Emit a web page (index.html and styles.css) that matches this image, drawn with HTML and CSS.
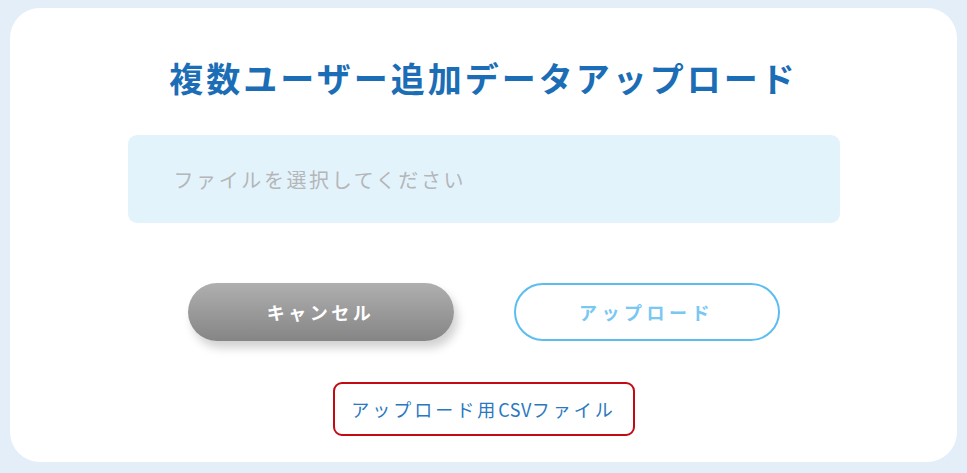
FILE: index.html
```html
<!DOCTYPE html>
<html lang="ja">
<head>
<meta charset="utf-8">
<link rel="stylesheet" href="styles.css">
</head>
<body>
<div class="backdrop">
  <div class="modal">
    <h1 class="title">複数ユーザー追加データアップロード</h1>
    <div class="file-input">ファイルを選択してください</div>
    <div class="actions">
      <button class="btn btn-cancel">キャンセル</button>
      <button class="btn btn-upload">アップロード</button>
    </div>
    <a class="csv-link">アップロード用<span class="latin">CSV</span>ファイル</a>
  </div>
</div>
</body>
</html>
```
FILE: styles.css
```css
html, body {
  margin: 0;
  padding: 0;
}
body {
  width: 967px;
  height: 473px;
  background: #e4eef8;
  font-family: "Noto Sans CJK JP", "Noto Sans", sans-serif;
  overflow: hidden;
}
.backdrop {
  padding: 8px 10px 0 10px;
}
.modal {
  width: 947px;
  height: 454px;
  box-sizing: border-box;
  background: #ffffff;
  border-radius: 30px;
  display: flex;
  flex-direction: column;
  align-items: center;
  padding-top: 50px;
}
.title {
  margin: 0;
  font-size: 34px;
  line-height: 40px;
  font-weight: 700;
  color: #1b6db6;
  letter-spacing: 3px;
}
.file-input {
  margin-top: 37px;
  width: 712px;
  height: 88px;
  box-sizing: border-box;
  background: #e3f3fc;
  border-radius: 9px;
  padding-left: 46px;
  display: flex;
  align-items: center;
  font-size: 20px;
  color: #b4b6b8;
  letter-spacing: 2.6px;
}
.actions {
  margin-top: 60px;
  display: flex;
  gap: 60px;
}
.btn {
  width: 266px;
  height: 58px;
  border-radius: 29px;
  font-family: "Noto Sans CJK JP", "Noto Sans", sans-serif;
  font-size: 18px;
  font-weight: 700;
  letter-spacing: 3.5px;
  cursor: pointer;
}
.btn-cancel {
  border: none;
  color: #ffffff;
  background: linear-gradient(#b0afb0, #858585);
  box-shadow: 4px 7px 10px rgba(0, 0, 0, 0.18);
}
.btn-upload {
  background: #ffffff;
  border: 2px solid #5bbdf0;
  color: #78c8f2;
  letter-spacing: 4.5px;
}
.csv-link {
  margin-top: 41px;
  width: 302px;
  height: 54px;
  box-sizing: border-box;
  border: 2px solid #c10a12;
  border-radius: 9px;
  display: flex;
  align-items: center;
  justify-content: center;
  font-size: 18px;
  color: #2a78bf;
  letter-spacing: 3px;
}
.latin {
  letter-spacing: 0.5px;
}
```
